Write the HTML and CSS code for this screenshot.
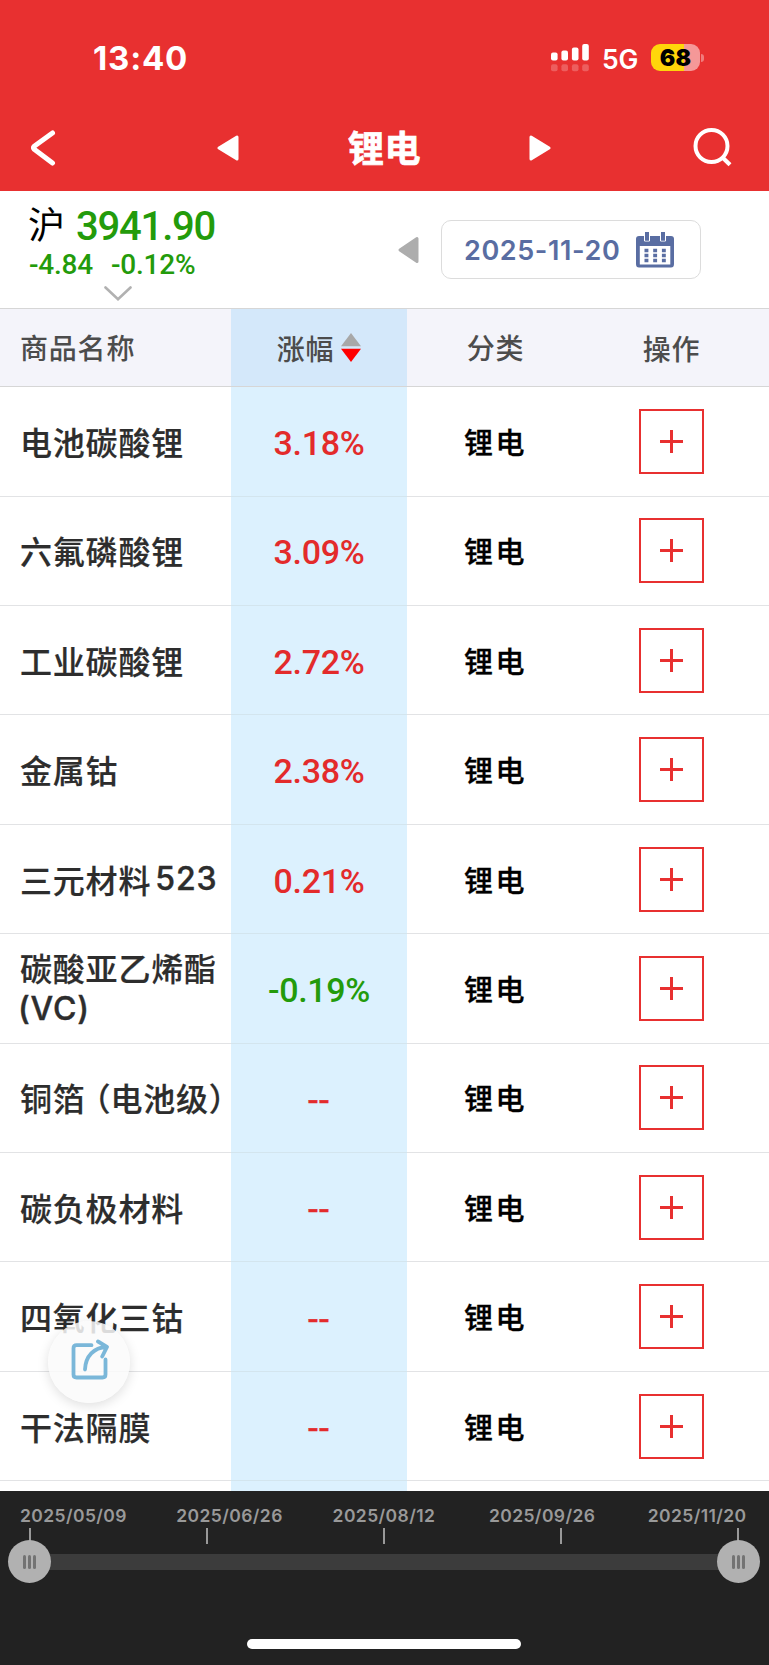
FILE: index.html
```html
<!DOCTYPE html>
<html lang="zh-CN">
<head>
<meta charset="utf-8">
<title>锂电</title>
<link rel="stylesheet" href="styles.css">
</head>
<body>
<header class="top">
  <div class="status">
    <span class="clock">13:40</span>
    <div class="status-right">
      <svg class="signal" width="38" height="28" viewBox="0 0 38 28"><g fill="#fff"><rect x="0" y="8.5" width="6.6" height="8" rx="2"/><rect x="10.4" y="6.5" width="6.6" height="10" rx="2"/><rect x="20.9" y="3.5" width="6.6" height="13" rx="2"/><rect x="31.2" y="0" width="6.6" height="16.5" rx="2"/></g><g fill="#fff" opacity=".22"><rect x="0" y="20.3" width="6.6" height="7" rx="2"/><rect x="10.4" y="20.3" width="6.6" height="7" rx="2"/><rect x="20.9" y="20.3" width="6.6" height="7" rx="2"/><rect x="31.2" y="20.3" width="6.6" height="7" rx="2"/></g></svg>
      <span class="net">5G</span>
      <div class="battery">68</div><i class="battery-tip"></i>
    </div>
  </div>
  <nav class="nav">
    <svg class="back" width="26" height="38" viewBox="0 0 26 38"><path d="M21.500 4 3.200 17.200Q1.800 18.700 3.200 20.200L21.500 34" fill="none" stroke="#fff" stroke-width="5" stroke-linecap="round" stroke-linejoin="round"/></svg>
    <svg class="prev" width="22" height="26" viewBox="0 0 22 26"><path d="M2 13 20 2V24Z" fill="#fff" stroke="#fff" stroke-width="3" stroke-linejoin="round"/></svg>
    <h1 class="title">锂电</h1>
    <svg class="next" width="22" height="26" viewBox="0 0 22 26"><path d="M20 13 2 2V24Z" fill="#fff" stroke="#fff" stroke-width="3" stroke-linejoin="round"/></svg>
    <svg class="search" width="40" height="40" viewBox="0 0 40 40"><circle cx="18.5" cy="18" r="16" fill="none" stroke="#fff" stroke-width="4"/><path d="M29.5 29.5 37 36.8" stroke="#fff" stroke-width="4.2"/></svg>
  </nav>
</header>
<section class="quote">
  <div class="index">
    <div class="index-main"><span class="market">沪</span><span class="price">3941.90</span></div>
    <div class="index-sub"><span class="diff">-4.84</span><span class="rate">-0.12%</span></div>
    <svg class="chev" width="28" height="16" viewBox="0 0 28 16"><path d="M1.500 1.500 14 13.300 26.500 1.500" fill="none" stroke="#b1b1b1" stroke-width="2.600" stroke-linecap="round"/></svg>
  </div>
  <svg class="day-prev" width="21" height="28" viewBox="0 0 21 28"><path d="M2 14 19 2.500V25.500Z" fill="#adadad" stroke="#adadad" stroke-width="3" stroke-linejoin="round"/></svg>
  <div class="date"><span>2025-11-20</span>
    <svg width="38" height="36" viewBox="0 0 38 36"><path d="M3 4H35Q38 4 38 7V32Q38 35.500 35 35.500H3Q0 35.500 0 32V7Q0 4 3 4Z" fill="#596da2"/><rect x="3.800" y="14" width="30.500" height="18.500" fill="#fff"/><path d="M8.500 0V9H13.500V0M24.500 0V9H29.500V0" fill="#596da2" stroke="#fff" stroke-width="1"/><path d="M9.200 0H12.900V8.500H9.200ZM25.200 0H28.900V8.500H25.200Z" fill="#596da2"/><path d="M8.500 18.500H29.800M8.500 23.500H29.800M8.500 28.500H29.800" stroke="#596da2" stroke-width="3.400" stroke-dasharray="3.900 4.800"/></svg>
  </div>
</section>
<main class="table">
  <div class="row head">
    <span class="name">商品名称</span>
    <span class="pct">涨幅<svg width="20" height="29" viewBox="0 0 20 29"><path d="M0 13.300 10 0 20 13.300Z" fill="#a8a8a8"/><path d="M0 15.800H20L10 29Z" fill="#f00"/></svg></span>
    <span class="type">分类</span><span class="op">操作</span>
  </div>
  <div class="row"><span class="name">电池碳酸锂</span><span class="pct">3.18%</span><span class="type">锂电</span><span class="op"><button class="add"></button></span></div>
  <div class="row"><span class="name">六氟磷酸锂</span><span class="pct">3.09%</span><span class="type">锂电</span><span class="op"><button class="add"></button></span></div>
  <div class="row"><span class="name">工业碳酸锂</span><span class="pct">2.72%</span><span class="type">锂电</span><span class="op"><button class="add"></button></span></div>
  <div class="row"><span class="name">金属钴</span><span class="pct">2.38%</span><span class="type">锂电</span><span class="op"><button class="add"></button></span></div>
  <div class="row"><span class="name">三元材料<b class="latin num">523</b></span><span class="pct">0.21%</span><span class="type">锂电</span><span class="op"><button class="add"></button></span></div>
  <div class="row two"><span class="name">碳酸亚乙烯酯<br><b class="latin">(VC)</b></span><span class="pct down">-0.19%</span><span class="type">锂电</span><span class="op"><button class="add"></button></span></div>
  <div class="row"><span class="name">铜箔<b class="paren">（</b>电池级）</span><span class="pct none">--</span><span class="type">锂电</span><span class="op"><button class="add"></button></span></div>
  <div class="row"><span class="name">碳负极材料</span><span class="pct none">--</span><span class="type">锂电</span><span class="op"><button class="add"></button></span></div>
  <div class="row"><span class="name">四氧化三钴</span><span class="pct none">--</span><span class="type">锂电</span><span class="op"><button class="add"></button></span></div>
  <div class="row"><span class="name">干法隔膜</span><span class="pct none">--</span><span class="type">锂电</span><span class="op"><button class="add"></button></span></div>
  <div class="row rest"><span class="name"></span><span class="pct"></span></div>
</main>
<div class="share"><svg width="40" height="42" viewBox="0 0 40 42"><g fill="none" stroke="#7ab7d9" stroke-width="3.800" stroke-linecap="round" stroke-linejoin="round"><path d="M20.500 6.200H5.500Q2.500 6.200 2.500 9.200V35.500Q2.500 38.500 5.500 38.500H31.500Q34.500 38.500 34.500 35.500V20.500"/><path d="M14 30.500C14.500 17 23 8.500 35.500 8M27 2.500 36 7.800 31.200 17.500"/></g></svg></div>
<footer class="timeline">
  <div class="dates"><span>2025/05/09</span><span>2025/06/26</span><span>2025/08/12</span><span>2025/09/26</span><span>2025/11/20</span></div>
  <div class="ticks"><i></i><i></i><i></i><i></i><i></i></div>
  <div class="slider"><span class="knob"><i></i><i></i><i></i></span><span class="track"></span><span class="knob"><i></i><i></i><i></i></span></div>
  <div class="home"></div>
</footer>
</body>
</html>
```
FILE: styles.css
```css
* { box-sizing: border-box; }
body {
  margin: 0; width: 769px; height: 1665px; overflow: hidden;
  display: flex; flex-direction: column; position: relative;
  background: #fff; color: #2d2d2d;
  font-family: Inter, "Noto Sans CJK SC", sans-serif;
}
svg { display: block; flex: none; }
.top { height: 191px; flex: none; background: #e83030; color: #fff; }
.status { height: 108px; padding: 7px 65px 0 93px; display: flex; align-items: center; justify-content: space-between; }
.clock { font-size: 33px; font-weight: 700; letter-spacing: 0.8px; }
.status-right { display: flex; align-items: center; }
.net { margin-left: 13px; width: 49px; font-size: 26.5px; font-weight: 600; letter-spacing: -0.2px; padding-top: 2px; }
.battery { width: 49px; height: 27px; border-radius: 9px; background: linear-gradient(90deg, #ffd60a 68%, #f59898 68%); color: #000; font-size: 23px; font-weight: 900; line-height: 28px; text-align: center; letter-spacing: 0.3px; }
.battery-tip { width: 3px; height: 8px; margin-left: 1px; border-radius: 0 4px 4px 0; background: #f07c7c; }
.nav { height: 80px; display: flex; align-items: center; padding-left: 31px; }
.prev { margin-left: 160px; }
.title { margin: 0; width: 72px; margin-left: 109px; font-size: 36px; line-height: 50px; letter-spacing: 0.6px; font-weight: 700; white-space: nowrap; -webkit-text-stroke: 0.7px #fff; padding-top: 1px; }
.next { margin-left: 109px; }
.search { margin-left: 142px; }
.quote { height: 118px; flex: none; display: flex; align-items: flex-start; border-bottom: 1px solid #d6d6d6; }
.index { width: 398px; padding: 13px 0 0 28px; font-family: Roboto, "Noto Sans CJK SC", sans-serif; }
.index-main { height: 44px; display: flex; align-items: center; }
.market { color: #000; font-size: 37px; line-height: 44px; width: 48px; padding-top: 2px; }
.price { color: #239b0b; font-size: 40px; font-weight: 500; line-height: 44px; letter-spacing: -1.2px; padding-top: 1px; }
.index-sub { display: flex; height: 34px; margin-top: 1px; color: #239b0b; font-size: 28px; line-height: 32px; font-weight: 500; letter-spacing: -0.2px; }
.diff { width: 83px; padding-left: 1px; }
.chev { margin: 3px 0 0 76px; }
.day-prev { margin-top: 45px; }
.date { margin: 29px 0 0 22px; width: 260px; height: 59px; border: 1px solid #dcdcdc; border-radius: 10px; display: flex; align-items: center; color: #596da2; padding-left: 22px; }
.date span { font-size: 27px; font-weight: 600; letter-spacing: 0.6px; width: 172px; white-space: nowrap; padding-top: 1px; }
.table { height: 1182px; overflow: hidden; flex: none; }
.row { height: 109.4px; display: grid; grid-template-columns: 231px 176px 177px 176px; }
.row > span { display: flex; align-items: center; justify-content: center; border-bottom: 1px solid #e2e3e5; white-space: nowrap; }
.row > .op { width: 185px; padding-right: 10px; }
.row > .name { justify-content: flex-start; padding-left: 20px; padding-bottom: 1px; font-size: 32px; letter-spacing: 0.8px; font-weight: 500; -webkit-text-stroke: 0.2px; }
.row > .pct { background: #dcf1fe; color: #e32b2b; font-family: Roboto, sans-serif; font-size: 34px; font-weight: 500; letter-spacing: -0.3px; padding-top: 3px; border-color: #d3e5ee; }
.row > .down { color: #239b0b; }
.row > .none { font-size: 36px; font-weight: 400; -webkit-text-stroke: 0.4px; letter-spacing: 1px; padding-top: 6px; }
.row > .type { color: #000; font-size: 29px; font-weight: 500; letter-spacing: 2.4px; -webkit-text-stroke: 0.3px; padding-bottom: 1px; }
.row.head { height: 78.3px; background: #f4f4fa; }
.row.head > span { font-size: 28px; font-weight: 500; letter-spacing: 0.8px; color: #4c4c4c; border-bottom: 1px solid #d6d6d6; font-family: "Noto Sans CJK SC", sans-serif; padding-top: 0; -webkit-text-stroke: 0; }
.row.head > .pct { background: #d4e8fa; }
.pct svg { margin-left: 7px; }
.latin { font-family: Inter, sans-serif; font-weight: 500; letter-spacing: 0.9px; -webkit-text-stroke: 0.4px; }
.num { margin-left: 4px; }
.row.two > .name { display: block; line-height: 39px; padding-top: 16px; }
.row.two .latin { letter-spacing: 0.8px; margin-left: -2px; }
.paren { font-weight: 500; font-feature-settings: "halt"; margin: 0 -1px 0 9px; }
.add { width: 65px; height: 65px; padding: 0; border: 2px solid #e83030; background: linear-gradient(#e83030, #e83030) center / 23px 3px no-repeat, linear-gradient(#e83030, #e83030) center / 3px 23px no-repeat, #fff; }
.rest { height: 12px; }
.share { position: absolute; left: 48px; top: 1321px; width: 82px; height: 82px; border-radius: 50%; background: rgba(250, 250, 250, .85); box-shadow: 0 3px 12px rgba(0, 0, 0, .13); padding: 18px 0 0 23px; }
.timeline { flex: 1; background: #222; }
.dates { display: grid; grid-template-columns: repeat(3, 156.3px) 158.8px auto; padding: 14px 0 0 20px; height: 37px; font-size: 17.5px; line-height: 22px; font-weight: 600; letter-spacing: 0.4px; color: #999; }
.ticks { height: 16px; padding: 0 30px 0 29px; display: flex; justify-content: space-between; }
.ticks i { width: 2px; height: 16px; background: #999; }
.slider { height: 43px; margin-top: -4px; padding: 0 9px 0 8px; display: flex; align-items: center; }
.track { flex: 1; height: 16px; margin: 0 -3px; background: #3c3c3c; }
.knob { z-index: 1; width: 43px; height: 43px; border-radius: 50%; background: #b1b1b1; display: flex; align-items: center; justify-content: center; gap: 2px; }
.knob i { width: 3px; height: 14px; border-radius: 2px; background: #737373; }
.home { width: 274px; height: 10px; margin: 56px auto 0 247px; border-radius: 5px; background: #fff; }
```
